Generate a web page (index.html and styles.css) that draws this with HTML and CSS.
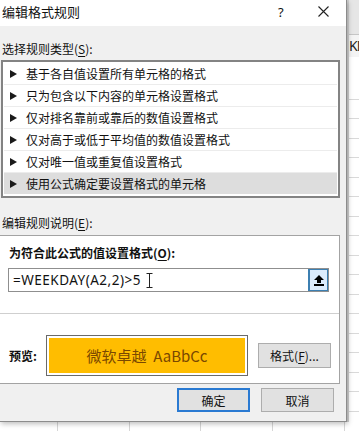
FILE: index.html
```html
<!DOCTYPE html>
<html lang="zh-CN">
<head>
    <meta charset="UTF-8">
    <title>编辑格式规则</title>
    <link rel="stylesheet" href="styles.css">
</head>
<body>
    <div class="screen">
        <div class="dialog">
            <div class="titlebar">
                <span class="title">编辑格式规则</span>
                <span class="help">?</span>
                <svg class="close" width="11" height="11" viewBox="0 0 11 11">
                    <path d="M0.5 0.5 L10.5 10.5 M10.5 0.5 L0.5 10.5" stroke="#222" stroke-width="1.1" fill="none"/>
                </svg>
            </div>
            <div class="content">
                <div class="label">选择规则类型(<u>S</u>):</div>
                <ul class="rules">
                    <li class="rule"><svg class="arrow" width="7" height="8" viewBox="0 0 7 8"><polygon points="0,0 7,4 0,8" fill="#1a1a1a"/></svg>基于各自值设置所有单元格的格式</li>
                    <li class="rule"><svg class="arrow" width="7" height="8" viewBox="0 0 7 8"><polygon points="0,0 7,4 0,8" fill="#1a1a1a"/></svg>只为包含以下内容的单元格设置格式</li>
                    <li class="rule"><svg class="arrow" width="7" height="8" viewBox="0 0 7 8"><polygon points="0,0 7,4 0,8" fill="#1a1a1a"/></svg>仅对排名靠前或靠后的数值设置格式</li>
                    <li class="rule"><svg class="arrow" width="7" height="8" viewBox="0 0 7 8"><polygon points="0,0 7,4 0,8" fill="#1a1a1a"/></svg>仅对高于或低于平均值的数值设置格式</li>
                    <li class="rule"><svg class="arrow" width="7" height="8" viewBox="0 0 7 8"><polygon points="0,0 7,4 0,8" fill="#1a1a1a"/></svg>仅对唯一值或重复值设置格式</li>
                    <li class="rule selected"><svg class="arrow" width="7" height="8" viewBox="0 0 7 8"><polygon points="0,0 7,4 0,8" fill="#1a1a1a"/></svg>使用公式确定要设置格式的单元格</li>
                </ul>

                <div class="label label-edit">编辑规则说明(<u>E</u>):</div>
                <div class="panel">
                    <div class="panel-title">为符合此公式的值设置格式(<u>O</u>):</div>
                    <div class="formula">
                        <span class="formula-text">=WEEKDAY(A2,2)&gt;5</span>
                        <svg class="ibeam" width="7" height="15" viewBox="0 0 7 15">
                            <path d="M0.5 0.5 H6.5 M3.5 0.5 V14.5 M0.5 14.5 H6.5" stroke="#222" stroke-width="1" fill="none"/>
                        </svg>
                        <span class="collapse">
                            <svg width="10" height="11" viewBox="0 0 10 11">
                                <polygon points="5,0 10,5 7,5 7,8 3,8 3,5 0,5" fill="#000"/>
                                <rect x="0" y="9" width="10" height="2" fill="#000"/>
                            </svg>
                        </span>
                    </div>
                    <div class="divider"></div>
                    <div class="preview-row">
                        <span class="preview-label">预览:</span>
                        <div class="preview-box">
                            <div class="preview-fill">微软卓越&nbsp; AaBbCc</div>
                        </div>
                        <button class="btn btn-format">格式(<u>F</u>)...</button>
                    </div>
                </div>

                <div class="actions">
                    <button class="btn btn-primary">确定</button>
                    <button class="btn">取消</button>
                </div>
            </div>
        </div>

        <div class="edge">
            <div class="edge-head"></div>
            <div class="edge-cell">KD</div>
            <div class="edge-grid"></div>
        </div>
    </div>
    <div class="sheet-bottom"></div>
</body>
</html>
```

FILE: styles.css
```css
body {
    margin: 0;
    width: 359px;
    height: 431px;
    overflow: hidden;
    background-color: #ffffff;
    font-family: "Noto Sans", "Noto Sans CJK SC", sans-serif;
    font-size: 12px;
    color: #111;
}

.screen {
    display: flex;
    height: 422px;
}

/* dialog */

.dialog {
    width: 346px;
    flex-shrink: 0;
    display: flex;
    flex-direction: column;
    background-color: #f0f0f0;
    border-right: 1px solid #8c8c8c;
    border-bottom: 1px solid #8c8c8c;
    box-shadow: 1px 2px 5px rgba(0, 0, 0, 0.25);
    position: relative;
    z-index: 1;
}

.titlebar {
    height: 26px;
    display: flex;
    align-items: center;
    background-color: #ffffff;
}

.title {
    margin-left: 2px;
    font-family: "Noto Sans CJK SC", sans-serif;
    font-size: 13px;
    line-height: 16px;
    flex: 1;
    margin-top: -2px;
}

.help {
    font-size: 13px;
    width: 10px;
    margin-right: 30px;
    margin-top: -3px;
}

.close {
    margin-right: 17px;
    margin-top: -3px;
}

.content {
    flex: 1;
    display: flex;
    flex-direction: column;
}

.label {
    font-family: "Noto Sans CJK SC", sans-serif;
    line-height: 16px;
    padding: 15px 0 0 2px;
    margin-bottom: 3px;
}

.label-edit {
    padding-top: 17px;
    margin-bottom: 4px;
}

u {
    text-decoration-thickness: 1px;
    text-underline-offset: 2px;
}

.rules {
    list-style: none;
    margin: 0 0 0 1px;
    padding: 1px 1px 0 1px;
    width: 333px;
    height: 133px;
    border: 2px solid #838383;
    background-color: #ffffff;
}

.rule {
    height: 21px;
    display: flex;
    align-items: center;
    border-bottom: 1px solid #ececec;
    padding-left: 6px;
    font-family: "Noto Sans CJK SC", sans-serif;
    line-height: 16px;
}

.rule.selected {
    background-color: #dddddd;
    border-bottom: none;
}

.arrow {
    margin-right: 9px;
}

/* rule description panel */

.panel {
    width: 339px;
    height: 147px;
    background-color: #ffffff;
    border: 1px solid #a3a3a3;
    border-left: none;
    display: flex;
    flex-direction: column;
}

.panel-title {
    font-family: "Noto Sans CJK SC", sans-serif;
    font-weight: bold;
    line-height: 16px;
    padding: 9px 0 0 9px;
}

.formula {
    margin: 7px 10px 0 8px;
    height: 22px;
    border: 1px solid #8f8f8f;
    display: flex;
    align-items: center;
    background-color: #ffffff;
}

.formula-text {
    font-family: "Noto Sans", sans-serif;
    font-size: 13.5px;
    padding-left: 4px;
    letter-spacing: 0.5px;
}

.ibeam {
    margin-left: 5px;
}

.collapse {
    margin-left: auto;
    width: 19px;
    height: 22px;
    display: flex;
    align-items: center;
    justify-content: center;
    background-color: #dcecfc;
    border-left: 1px solid #3c7fb1;
    box-shadow: inset 0 0 0 1px #3c7fb1;
}

.divider {
    margin-top: 21px;
    height: 1px;
    background-color: #cfcfcf;
}

.preview-row {
    display: flex;
    align-items: center;
    padding-left: 9px;
    margin-top: 21px;
}

.preview-label {
    font-family: "Noto Sans CJK SC", sans-serif;
    font-weight: bold;
    width: 37px;
}

.preview-box {
    width: 196px;
    height: 35px;
    padding: 2px;
    border: 1px solid #6a6a6a;
    background-color: #ffffff;
}

.preview-fill {
    height: 100%;
    display: flex;
    align-items: center;
    justify-content: center;
    background-color: #ffbd00;
    color: #7a4800;
    font-family: "Noto Sans CJK SC", sans-serif;
    font-size: 15px;
}

/* buttons */

.btn {
    width: 73px;
    height: 24px;
    padding: 0;
    border: 1px solid #adadad;
    background-color: #e1e1e1;
    font-family: "Noto Sans CJK SC", sans-serif;
    font-size: 12px;
    color: #111;
}

.btn-format {
    margin-left: 10px;
    height: 25px;
}

.actions {
    display: flex;
    justify-content: flex-end;
    gap: 11px;
    margin-top: 4px;
    padding-right: 12px;
}

.btn-primary {
    border: 2px solid #2a7ad2;
}

/* worksheet behind the dialog */

.edge {
    flex: 1;
    min-width: 0;
    display: flex;
    flex-direction: column;
    border-left: 2px solid #cfcfcf;
}

.edge-head {
    height: 34px;
    background-color: #e6e6e6;
    border-bottom: 1px solid #c6c6c6;
}

.edge-cell {
    height: 22px;
    line-height: 22px;
    font-size: 14px;
    letter-spacing: -1px;
    overflow: hidden;
    white-space: nowrap;
    color: #222;
    background-color: #f4f4f4;
}

.edge-grid {
    flex: 1;
    background-image: repeating-linear-gradient(180deg, transparent 0, transparent 18.5px, #d9d9d9 18.5px, #d9d9d9 19.5px);
    background-position: 0 4px;
}

.sheet-bottom {
    height: 9px;
    background-image: repeating-linear-gradient(90deg, transparent 0, transparent 57px, #d6d6d6 57px, #d6d6d6 58px, transparent 58px, transparent 71.7px);
}
```
